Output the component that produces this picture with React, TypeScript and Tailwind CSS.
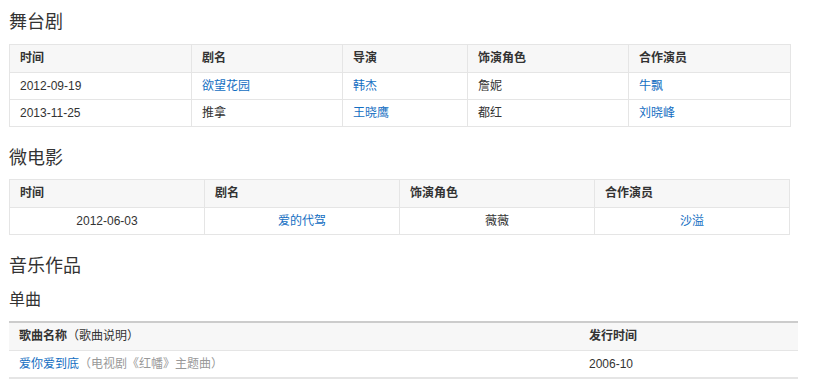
const font = { fontFamily: '"Liberation Sans", Arial, "Noto Sans CJK SC", sans-serif' }

interface StageRow {
  date: string
  title: string
  titleLink: boolean
  director: string
  role: string
  partner: string
}

const stage: StageRow[] = [
  { date: '2012-09-19', title: '欲望花园', titleLink: true, director: '韩杰', role: '詹妮', partner: '牛飘' },
  { date: '2013-11-25', title: '推拿', titleLink: false, director: '王晓鹰', role: '都红', partner: '刘晓峰' },
]

const link = 'text-[#136ec2]'
const th = 'border border-[#e5e5e5] bg-[#f7f7f7] px-[10px] py-[6px] text-left font-bold leading-[15px]'
const td = 'border border-[#e5e5e5] px-[10px] py-[6px] leading-[14px]'

export default function App() {
  return (
    <div className="min-h-screen bg-white pl-[9px] pt-[10px] text-[12px] text-[#333]" style={font}>
      <h2 className="mb-[10px] text-[18px] leading-[24px]">舞台剧</h2>
      <table className="w-[781px] table-fixed border-collapse">
        <colgroup>
          <col className="w-[182px]" />
          <col className="w-[151px]" />
          <col className="w-[125px]" />
          <col className="w-[161px]" />
          <col className="w-[162px]" />
        </colgroup>
        <thead>
          <tr>
            <th className={th}>时间</th>
            <th className={th}>剧名</th>
            <th className={th}>导演</th>
            <th className={th}>饰演角色</th>
            <th className={th}>合作演员</th>
          </tr>
        </thead>
        <tbody>
          {stage.map((row) => (
            <tr key={row.date}>
              <td className={td}>{row.date}</td>
              <td className={td}>
                {row.titleLink ? <a className={link}>{row.title}</a> : row.title}
              </td>
              <td className={td}>
                <a className={link}>{row.director}</a>
              </td>
              <td className={td}>{row.role}</td>
              <td className={td}>
                <a className={link}>{row.partner}</a>
              </td>
            </tr>
          ))}
        </tbody>
      </table>

      <h2 className="mt-[19px] mb-[9px] text-[18px] leading-[24px]">微电影</h2>
      <table className="w-[781px] table-fixed border-collapse">
        <thead>
          <tr>
            <th className={th}>时间</th>
            <th className={th}>剧名</th>
            <th className={th}>饰演角色</th>
            <th className={th}>合作演员</th>
          </tr>
        </thead>
        <tbody>
          <tr className="text-center">
            <td className={td}>2012-06-03</td>
            <td className={td}>
              <a className={link}>爱的代驾</a>
            </td>
            <td className={td}>薇薇</td>
            <td className={td}>
              <a className={link}>沙溢</a>
            </td>
          </tr>
        </tbody>
      </table>

      <h2 className="mt-[19px] text-[18px] leading-[24px]">音乐作品</h2>
      <h3 className="mt-[11px] mb-[10px] text-[16px] leading-[22px]">单曲</h3>
      <table className="w-[789px] table-fixed border-collapse">
        <colgroup>
          <col className="w-[570px]" />
          <col className="w-[219px]" />
        </colgroup>
        <thead>
          <tr className="border-t-2 border-b border-t-[#cccccc] border-b-[#e5e5e5] bg-[#f7f7f7]">
            <th className="px-[10px] py-[6px] text-left leading-[15px]">
              <span className="font-bold">歌曲名称</span>
              <span className="font-normal">（歌曲说明）</span>
            </th>
            <th className="px-[10px] py-[6px] text-left font-bold leading-[15px]">发行时间</th>
          </tr>
        </thead>
        <tbody>
          <tr className="border-b-2 border-b-[#e5e5e5]">
            <td className="px-[10px] py-[6px] leading-[14px]">
              <a className={link}>爱你爱到底</a>
              <span className="text-[#999]">（电视剧《红幡》主题曲）</span>
            </td>
            <td className="px-[10px] py-[6px] leading-[14px]">2006-10</td>
          </tr>
        </tbody>
      </table>
    </div>
  )
}
